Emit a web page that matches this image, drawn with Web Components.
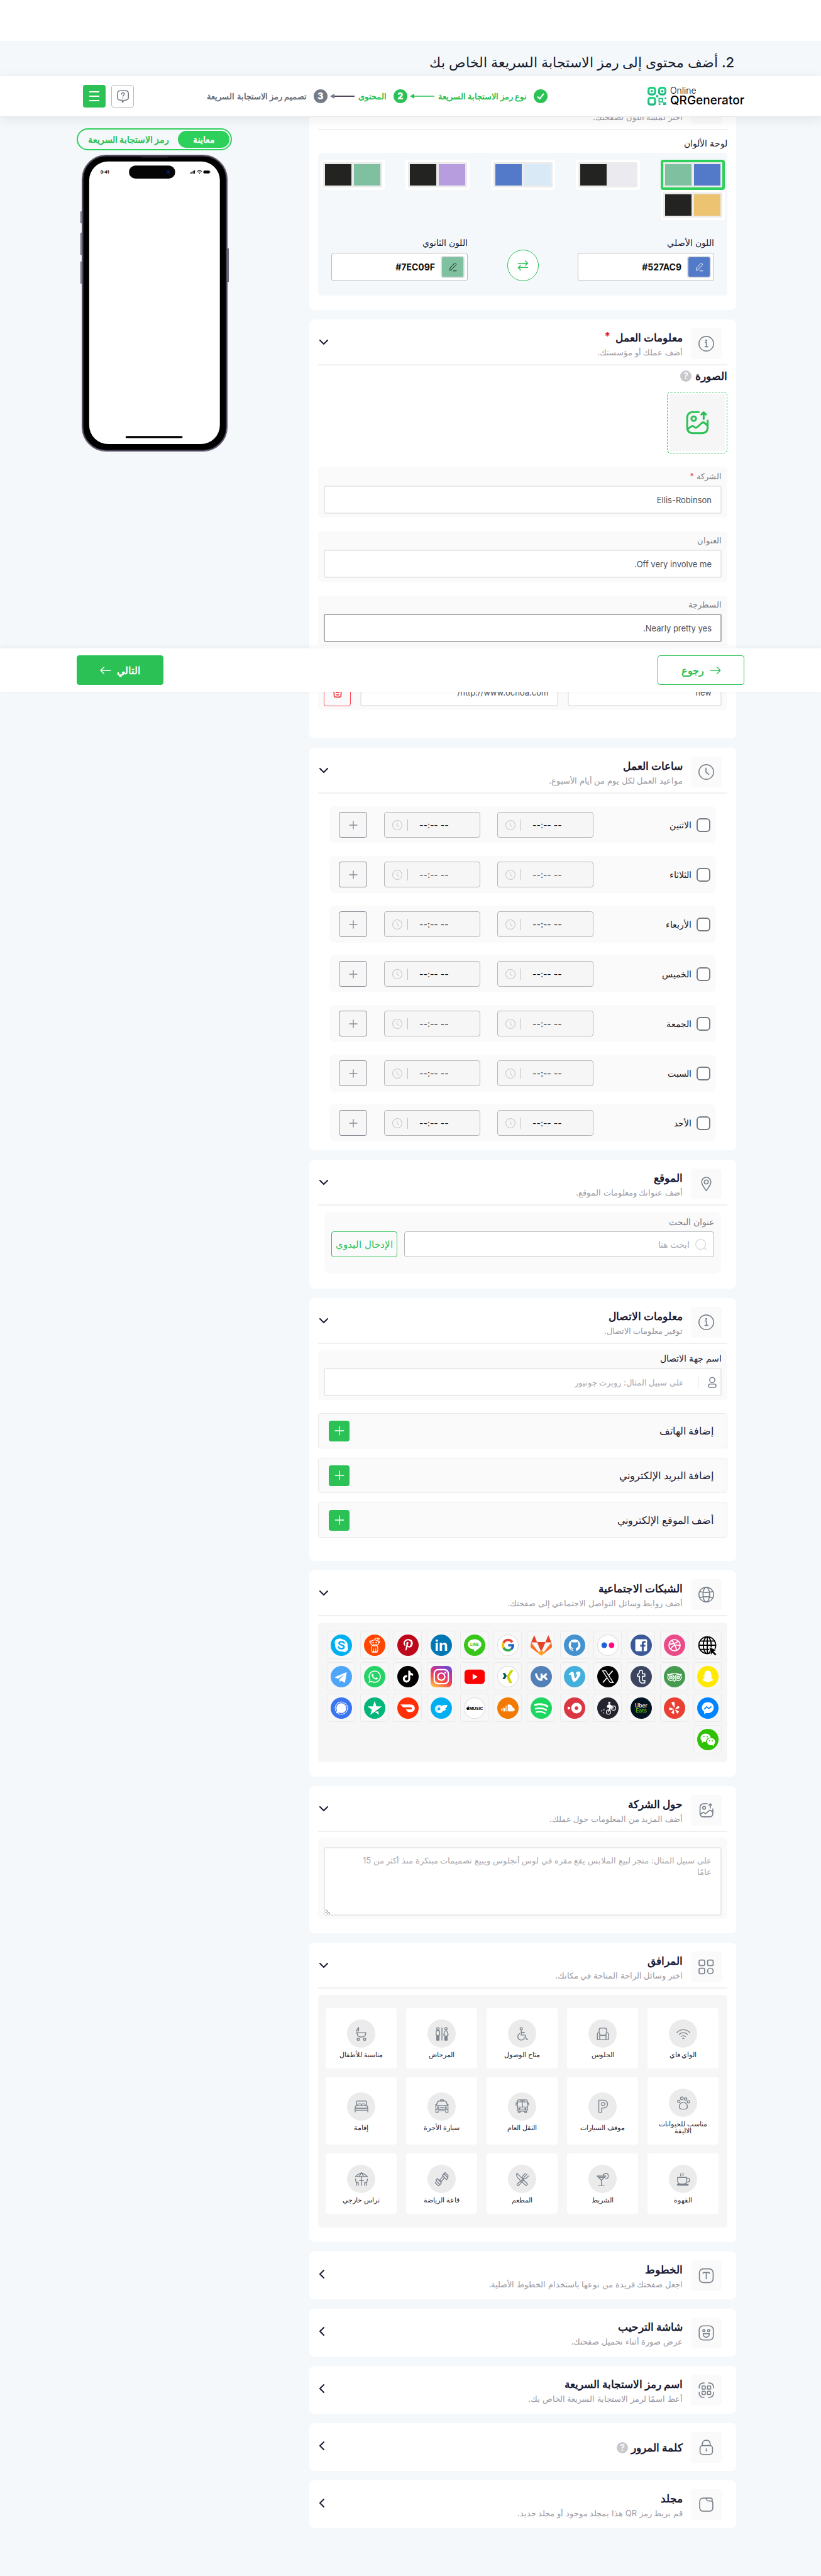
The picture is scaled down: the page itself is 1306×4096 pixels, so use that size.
<!DOCTYPE html>
<html lang="ar" dir="rtl">
<head>
<meta charset="utf-8">
<meta name="viewport" content="width=device-width, initial-scale=1">
<title>Online QR Generator</title>
<style>
  html { background: #f4f8fb; }
  body {
    margin: 0; font-family: Inter, "Liberation Sans", sans-serif; font-size: 13px; line-height: 20px; color: #1b1b33;
    --green: #2bc155; --lime: #2dd05b; --muted: #9a9aa3; --steel: #7a828c; --line: #ebebeb; --panel: #fafafa;
  }
</style>
</head>
<body>
<qr-page></qr-page>

<script>
/* ---------- shared base ---------- */
const RESET = `
  *, *::before, *::after { box-sizing: border-box; }
  :host { display: block; }
  :host([hidden]) { display: none; }
  button, input, textarea { font: inherit; color: inherit; margin: 0; }
  button { padding: 0; cursor: pointer; background: none; border: 0; }
  svg { display: block; flex: none; }
`;
class Base extends HTMLElement {
  constructor() { super(); this.attachShadow({ mode: 'open' }); }
  connectedCallback() { this.shadowRoot.innerHTML = `<style>${RESET}${this.css()}</style>${this.html()}`; }
  a(name, fallback = '') { return this.getAttribute(name) ?? fallback; }
  css() { return ''; }
  html() { return '<slot></slot>'; }
}
const define = (name, css, html) => customElements.define(name, class extends Base {
  css() { return css; }
  html() { return typeof html === 'function' ? html(this) : html; }
});

/* ---------- line icons, 24 unit grid ---------- */
const ICONS = {
  info: '<circle cx="12" cy="12" r="11.2"/><path d="M10.300 10h1.900v6.500M10 16.700h4.400"/><circle cx="12" cy="6.900" r=".7" fill="currentColor"/>',
  clock: '<circle cx="12" cy="12" r="11.200"/><path d="M11.500 6v6.300l4.200 3.300"/>',
  pin: '<path d="M12 22.500c-2.800-4.600-7-8.500-7-13.600a7 7 0 0 1 14 0c0 5.100-4.200 9-7 13.600z"/><circle cx="12" cy="9" r="3"/>',
  globe: '<circle cx="12" cy="12" r="11.200"/><ellipse cx="12" cy="12" rx="5" ry="11.200"/><path d="M2.500 7.500c6 1.600 13 1.600 19 0M2.500 16.500c6-1.600 13-1.600 19 0"/>',
  image: '<path d="M13.500 2H8C4.500 2 2.500 4 2.500 7.500v9C2.500 20 4.500 22 8 22h8.500c3.500 0 5.500-2 5.500-5.500V10"/><circle cx="8.700" cy="8.200" r="2.200"/><path d="M3 18l3.500-2.400c.8-.5 1.500-.4 2.200.1l.9.700c.8.600 1.800.5 2.500-.1l4.400-4c.7-.6 1.800-.6 2.500 0l2.500 2.200M18.200 8.500V2.300M16 4.300l2.200-2.200 2.200 2.200"/>',
  grid: '<rect x="1" y="1.500" width="8.500" height="8.500" rx="2"/><rect x="14" y="1.500" width="8.500" height="8.500" rx="2"/><rect x="1" y="14" width="8.500" height="8.500" rx="2"/><circle cx="18.250" cy="18.250" r="4.300"/>',
  type: '<rect x="1.500" y="1.500" width="21" height="21" rx="6"/><path d="M7 8.600c0-1 .6-1.600 1.600-1.600h6.800c1 0 1.600.6 1.600 1.600M12 7v9.800"/>',
  smile: '<rect x="1.200" y="1.200" width="21.600" height="21.600" rx="6"/><circle cx="8.300" cy="8.300" r="1.600"/><circle cx="15.700" cy="8.300" r="1.600"/><path d="M7.400 13h9.200v1a4.600 4.600 0 0 1-9.200 0z"/>',
  scan: '<path d="M1.200 8.500V7a6 6 0 0 1 6-6h1.500M15.500 1H17a6 6 0 0 1 6 6v1.500M23 15.500V17a6 6 0 0 1-6 6h-1.500M8.700 23H7.200a6 6 0 0 1-6-6v-1.500"/><rect x="5.500" y="5.500" width="5" height="5" rx="1"/><rect x="13.700" y="5.500" width="5" height="5" rx="1"/><rect x="5.500" y="13.700" width="5" height="5" rx="1"/><rect x="13.700" y="13.700" width="5" height="5" rx="1"/>',
  lock: '<rect x="2.500" y="9.300" width="19" height="13.500" rx="4"/><path d="M6 9.300V7c0-3.600 2.300-6 6-6s6 2.400 6 6v2.300M12 14.300v3.400"/>',
  folder: '<path d="M10.500 2H19a2 2 0 0 1 2 2v2.500M10.500 2H7.500C4 2 2 4 2 7.500v9C2 20 4 22 7.500 22h9c3.500 0 5.500-2 5.500-5.500V9.500c0-2-1-3-3-3h-3.500c-1.500 0-2.200-.5-2.800-1.700L12.500 3.500C12 2.400 11.500 2 10.500 2z"/>',
  down: '<path d="M3 7.500l9 9 9-9"/>',
  left: '<path d="M12 3l-9 9 9 9"/>',
  plus: '<path d="M12 3v18M3 12h18"/>',
  search: '<circle cx="11.500" cy="11.500" r="9.500"/><path d="M18.500 18.500l4 3.500"/>',
  user: '<circle cx="12" cy="7" r="5.500"/><rect x="4" y="15.500" width="16" height="7" rx="3.500"/>',
  trash: '<path d="M2 5.500h20M8 5.500V3.500C8 2.500 8.500 2 9.500 2h5c1 0 1.500.5 1.500 1.500v2M4 5.500l.8 13c.1 2.300 1.200 3.500 3.500 3.500h7.400c2.300 0 3.400-1.200 3.500-3.500l.8-13M9 12h6M10 17h4"/>',
  edit: '<path d="M4 20l1-5.500L15.500 3.200a2 2 0 0 1 3 0l.9.900a2 2 0 0 1 0 2.900L9 18.500zM13 22h8"/>',
  swap: '<path d="M3 8h18M16.500 3.500L21 8l-4.500 4M21 16H3M7.500 12L3 16.500 7.500 21"/>',
  right: '<path d="M1.500 12h21M15.500 5l7 7-7 7"/>',
  back: '<path d="M22.500 12h-21M8.500 5l-7 7 7 7"/>',
  help: '<path d="M7 1.500h10c3 0 5 2 5 5v7c0 3-2 5-5 5h-2.500L11 22.500v-4H7c-3 0-5-2-5-5v-7c0-3 2-5 5-5z"/><path d="M9.600 7.700c0-3.400 5-3.200 5-.2 0 1.900-2.500 2-2.500 4M12.100 14.300v.6"/>',
  wifi: '<path d="M1 9.500c6-6.300 16-6.300 22 0M4.700 13.200c4-4.300 10.600-4.300 14.600 0M8.300 16.800c2-2.200 5.400-2.200 7.400 0M11 20.300c.6-.6 1.400-.6 2 0"/>',
  chair: '<path d="M5.500 10V5c0-2 1-3 3-3h7c2 0 3 1 3 3v5M6.500 16V12c0-1.300-.9-2.100-2-2.100S2.500 10.700 2.500 12v10h19V12c0-1.300-.9-2.100-2-2.100s-2 .8-2 2.100v4M6.500 14.500h11M6.500 16v6M17.500 16v6"/>',
  access: '<circle cx="10" cy="3" r="2"/><path d="M10 5v9h6.500l2.500 7.500 2-.5M10 9.500h5.500M7 11.500a6 6 0 1 0 8.700 7"/>',
  wc: '<circle cx="5" cy="3" r="2.100"/><path d="M2 14V9c0-2 1-3 3-3s3 1 3 3v5M3 14v9h1.500v-8h1v8H7v-9M12 1.500v21.500"/><circle cx="19" cy="3" r="2.100"/><path d="M17 8l-2 6h2v9h1.500v-7h1v7H21v-9h2l-2-6c-.6-2.200-3.400-2.200-4 0z"/>',
  stroller: '<path d="M3 7L7 .8V7zM3 10h16.500c0 4.500-3 7.500-8 7.500S4.500 15 4.500 11z"/><circle cx="6.500" cy="21.300" r="2"/><circle cx="17.500" cy="21.300" r="2"/>',
  paw: '<path d="M12 10.500c-4 0-7 4-7 7.500 0 3 2 4.500 4.500 4.500h5c2.500 0 4.500-1.500 4.500-4.500 0-3.500-3-7.500-7-7.500z"/><circle cx="4" cy="9" r="2.100"/><circle cx="9.500" cy="3.800" r="2.400"/><circle cx="16" cy="4.800" r="2.100"/><circle cx="20.800" cy="9.800" r="2"/>',
  parking: '<path d="M5 1.500h8.500a6.800 6.800 0 0 1 0 13.600H10V22.500H5zM10 5.800v5h3.200a2.500 2.500 0 0 0 0-5z"/>',
  bus: '<rect x="3.500" y="1" width="17" height="19.500" rx="2"/><path d="M3.500 4.500h17M3.500 13.500h17M12 4.500v9M3.500 6.500H1v4M20.500 6.500H23v4M5 20.500V23h3v-2.500M16 20.500V23h3v-2.500M9.500 17h5M8.500 2.800h7"/><circle cx="6.700" cy="17" r="1.200"/><circle cx="17.300" cy="17" r="1.200"/>',
  taxi: '<path d="M1.500 22.500V12l3-7.500c.5-1 1.500-1.500 2.500-1.500h10c1 0 2 .5 2.500 1.500l3 7.500v10.500h-4V20h-13v2.500zM1 9.500h2M21 9.500h2M3 10.500h18M9.500 3V1h5v2M9.500 14.500h5M1.500 17.500h21"/><circle cx="5.500" cy="14.300" r="1.300"/><circle cx="18.500" cy="14.300" r="1.300"/>',
  bed: '<path d="M3.500 11V4.500c0-1 .5-1.500 1.500-1.500h14c1 0 1.500.5 1.500 1.500V11M2.500 11h19l1.500 3v5H1v-5zM1 19v3M23 19v3M5.500 10c0-3 6.500-3 6.500 0M12 10c0-3 6.500-3 6.500 0M1 15.500h22"/>',
  cup: '<path d="M2 9h16v5c0 4-2.500 6.500-6 6.500H8c-3.500 0-6-2.500-6-6.500zM18 10.500h2.500c3.300 0 3.300 6.500-1 6.500H17M1.500 21h19c-.3 1.300-1 2-2.500 2H4c-1.500 0-2.300-.7-2.500-2zM7.500 6.500c-1-1.500 1-2.500 0-4.500M11.500 6.500c-1-1.500 1-2.500 0-5"/>',
  cocktail: '<path d="M2 6.500h15L9.500 14zM9.500 14v8.500M5 22.500h9M4.500 9h10.500M12.500 6.500c0-6 9-5.500 9 0 0 3.200-2.300 4.800-5 4.500"/>',
  cutlery: '<path d="M2.500 1.500C1 5 3 9.500 8 13.500l9 8.500c1 1 2.200 1 3 .2.900-.9.800-2-.2-3zM17 2l-4 4c-1 1.300-1 2.500 0 4M22.500 6.500l-4 4c-1.500 1-2.700 1-4 0l-11 9.500c-1 1-1 2-.2 2.700.8.800 2 .7 2.800-.2l8-9.500M20 3.500l-5 5"/>',
  gym: '<path d="M8 13.500l6-6.500 2.500 2.800-6 6.500zM13 5.500l2.500-3 7 7.500-2.500 3zM16 2l1.500-1.500 5.500 6L21.500 8M1.500 14l2.500-3 7 7.500-2.500 3zM1 17l-.500 1.500 5.500 5 1.500-1"/>',
  terrace: '<path d="M1.500 7.500C4 5 8 2.500 12 1c4 1.500 8 4 10.500 6.500zM8 7.500L12 1l4 6.500M12 7.500V23M8.500 14.500h7M1.500 12l1.500 6h3.500V23M3 18v5M22.500 12L21 18h-3.500V23M21 18v5"/>'
};
customElements.define('qr-icon', class extends Base {
  css() { return ':host{display:inline-flex;flex:none;width:24px;height:24px} svg{width:100%;height:100%;overflow:visible}'; }
  html() {
    return `<svg viewBox="0 0 24 24" fill="none" stroke="currentColor" stroke-width="${this.a('stroke', '1.6')}" stroke-linecap="round" stroke-linejoin="round" aria-hidden="true">${ICONS[this.a('name')]}</svg>`;
  }
});

/* ---------- brand marks, 38 unit grid ---------- */
const disc = c => `<circle cx="19" cy="19" r="19" fill="${c}"/>`;
const ring = '<circle cx="19" cy="19" r="18.400" fill="#fff" stroke="#dedede" stroke-width="1.200"/>';
const mark = (d, s, fill = '#fff') => `<g transform="translate(${(38 - s) / 2} ${(38 - s) / 2}) scale(${s / 24})"><path fill="${fill}" d="${d}"/></g>`;
const BRANDS = {
  Website: '<g fill="none" stroke="#000" stroke-width="2"><circle cx="18" cy="19" r="15"/><ellipse cx="18" cy="19" rx="7" ry="15"/><path d="M18 4v30M3 19h30M5.500 11.500h25M5.500 26.500h25"/></g><path d="M21 22l14 5.500-5 2.500 5 5-3 3-5-5-2.500 4.500z" stroke="#f6f6f6" stroke-width="1.200"/>',
  Dribbble: disc('#ea4c89') + '<g fill="none" stroke="#fff" stroke-width="2"><circle cx="19" cy="19" r="10"/><path d="M14.500 10.500c4 5 6.500 10 8 17M9.500 17c6 .2 12-.8 16-5M12 26c3-6 9-9 17-6.500"/></g>',
  Facebook: disc('#3b5998') + '<rect x="8.500" y="8.500" width="21" height="21" rx="2" fill="#fff"/><path d="M20 29.500V21.500h-2.700v-3.200H20v-2.600c0-2.800 1.700-4.200 4.200-4.200h2.400v3h-1.500c-1.300 0-1.700.7-1.700 1.700v2.100h3.200l-.5 3.200h-2.700v8z" fill="#3b5998"/>',
  Flickr: ring + '<circle cx="12.500" cy="19" r="5" fill="#1d63d8"/><circle cx="25.500" cy="19" r="5" fill="#ff0a84"/>',
  GitHub: disc('#4493d0') + mark('M12 .297c-6.630 0-12 5.373-12 12 0 5.303 3.438 9.800 8.205 11.385.6.113.82-.258.82-.577 0-.285-.01-1.040-.015-2.040-3.338.724-4.042-1.610-4.042-1.610C4.422 18.070 3.633 17.700 3.633 17.700c-1.087-.744.084-.729.084-.729 1.205.084 1.838 1.236 1.838 1.236 1.070 1.835 2.809 1.305 3.495.998.108-.776.417-1.305.76-1.605-2.665-.3-5.466-1.332-5.466-5.930 0-1.310.465-2.380 1.235-3.220-.135-.303-.54-1.523.105-3.176 0 0 1.005-.322 3.300 1.230.96-.267 1.980-.399 3-.405 1.020.006 2.040.138 3 .405 2.280-1.552 3.285-1.230 3.285-1.230.645 1.653.24 2.873.12 3.176.765.84 1.230 1.910 1.230 3.220 0 4.610-2.805 5.625-5.475 5.920.42.36.81 1.096.81 2.220 0 1.606-.015 2.896-.015 3.286 0 .315.21.69.825.57C20.565 22.092 24 17.592 24 12.297c0-6.627-5.373-12-12-12', 21),
  GitLab: '<path d="M1 14L6.500 1l5 12.500h15L31.500 1 37 14z" fill="#e24329"/><path d="M1 14l18 23.500L37 14l1 6.500c.2 1.500-.3 2.500-1.500 3.500L19 37.500 1.500 24C.3 23 -.2 22 0 20.500z" fill="#fc6d26"/><path d="M11.500 13.500h15L19 31z" fill="#e24329"/><path d="M12.500 32.500L19 27.500l6.500 5L19 37.500z" fill="#fca326"/>',
  Google: ring + '<g fill="none" stroke-width="4.200"><path d="M26.800 13.600A9 9 0 0 0 11.200 14.500" stroke="#ea4335"/><path d="M11.200 14.500a9 9 0 0 0 0 9" stroke="#fbbc05"/><path d="M11.200 23.500a9 9 0 0 0 13.500 2.600" stroke="#34a853"/><path d="M24.700 26.100A9 9 0 0 0 28 19.200H19.500" stroke="#1967d2"/></g>',
  Line: '<circle cx="19" cy="19" r="19" fill="#39c61a"/><path d="M19 8.500c6.600 0 12 4 12 9 0 5.500-7.500 9.500-12 12.500-.8.500-1-.2-.8-3.600C12 26 7 22.500 7 17.500c0-5 5.400-9 12-9z" fill="#fff"/><text x="19" y="20.500" font-size="7" font-weight="700" text-anchor="middle" fill="#39c61a">LINE</text>',
  LinkedIn: disc('#0077b5') + '<text x="19" y="29" font-size="26" font-weight="700" text-anchor="middle" fill="#fff">in</text>',
  Pinterest: disc('#bd081c') + mark('M12.500 2C7.500 2 4.800 5.400 4.800 8.900c0 1.800.9 3.600 2.300 4.200.2.100.5 0 .5-.3l.2-.8c.1-.3 0-.4-.2-.6-.4-.5-.7-1.200-.7-2.200 0-2.800 2.100-5.100 5.400-5.100 2.800 0 4.400 1.800 4.400 4.100 0 3-1.300 5.600-3.300 5.600-1.100 0-1.900-.9-1.600-2 .3-1.300.9-2.700.9-3.700 0-.9-.5-1.600-1.400-1.600-1.100 0-2 1.200-2 2.700 0 1 .3 1.700.3 1.700l-1.400 5.900c-.4 1.700-.1 4 0 4.200 0 .1.200.2.3.1.1-.2 1.500-1.900 2-3.700l.8-3c.4.700 1.500 1.400 2.700 1.400 3.500 0 5.900-3.300 5.900-7.500C19.900 4.900 17.200 2 12.500 2z', 26),
  Reddit: disc('#ff4500') + '<g fill="none" stroke="#fff" stroke-width="1.300"><ellipse cx="19" cy="15" rx="7" ry="5.300"/><path d="M13 12c-2-2-4.500.8-1.800 3M25 12c2-2 4.500.8 1.800 3M19 9.700l1.500-3h3.500M15.500 17.300c2 1.500 5 1.500 7 0M14.500 20c-1.500 3-1.500 7 0 10.500h9c1.500-3.500 1.500-7.500 0-10.500M17 31v-6M21 31v-6M14 31.500h10"/><circle cx="25.600" cy="7.500" r="1.500"/></g><circle cx="16.300" cy="14.300" r="1.300" fill="#fff"/><circle cx="21.700" cy="14.300" r="1.300" fill="#fff"/>',
  Skype: disc('#00aff0') + '<path d="M14 7.500a7 7 0 0 1 6.500.8A11 11 0 0 1 30 21.500 6.600 6.600 0 0 1 20.500 30 11 11 0 0 1 8 17.500 6.700 6.700 0 0 1 14 7.500z" fill="#fff"/><path d="M24 15.200c-1-3-9-3.300-9 .4 0 3.700 8.800 2.200 8.800 6.400 0 4-9 4-10 .2" fill="none" stroke="#00aff0" stroke-width="2.800" stroke-linecap="round"/>',
  Snapchat: disc('#ffe900') + '<path d="M19 8.500c4 0 6 2.700 6 6v2.700c1-.4 2 .1 2 .8 0 .8-1.500 1.200-2.300 1.700.8 2.300 2.300 3.900 4.300 4.600.4.900-1.300 1.400-2.700 1.700l-.5 1.300c-2.500-.4-3.300.1-4.300 1-1.500 1.100-3.500 1.100-5 0-1-.9-1.800-1.400-4.300-1l-.5-1.300c-1.400-.3-3.100-.8-2.700-1.700 2-.7 3.500-2.300 4.300-4.600-.8-.5-2.300-.9-2.300-1.700 0-.7 1-1.200 2-.8v-2.700c0-3.300 2-6 6-6z" fill="#fff"/>',
  Tripadvisor: disc('#469b51') + '<g fill="none" stroke="#fff" stroke-width="1.600"><circle cx="12.500" cy="20.500" r="5.500"/><circle cx="25.500" cy="20.500" r="5.500"/><circle cx="12.500" cy="20.500" r="2.400"/><circle cx="25.500" cy="20.500" r="2.400"/><path d="M6 15h5c5-2.500 11-2.500 16 0h5M17 25l2 2.500 2-2.500"/></g><circle cx="12.500" cy="20.500" r="1" fill="#fff"/><circle cx="25.500" cy="20.500" r="1" fill="#fff"/>',
  Tumblr: disc('#3b4560') + '<path d="M16.500 8h4.500v6h4.500v4.500H21V24c0 2 1.500 2.300 4.500 1.500V30c-5 1.500-9.500 0-9.500-5v-6.500h-3.500V15c2.500-.8 3.700-3 4-7z" fill="#3b4560" stroke="#fff" stroke-width="1.700"/>',
  X: disc('#000') + '<path d="M9.500 8.500h5.500l13.500 21H23z" fill="none" stroke="#fff" stroke-width="1.500"/><path d="M27.500 8.500L20.300 17M17.500 21l-7.500 8.500" stroke="#fff" stroke-width="1.800"/>',
  Vimeo: disc('#43afdb') + mark('M23.977 6.416c-.105 2.338-1.739 5.543-4.894 9.609-3.268 4.247-6.026 6.370-8.290 6.370-1.409 0-2.578-1.294-3.553-3.881L5.322 11.400C4.603 8.816 3.834 7.522 3.010 7.522c-.179 0-.806.378-1.881 1.132L0 7.197c1.185-1.044 2.351-2.084 3.501-3.128C5.080 2.701 6.266 1.984 7.055 1.910c1.867-.18 3.016 1.100 3.447 3.838.465 2.953.789 4.789.971 5.507.539 2.450 1.131 3.674 1.776 3.674.502 0 1.256-.796 2.265-2.385 1.004-1.589 1.540-2.797 1.612-3.628.144-1.371-.395-2.061-1.614-2.061-.574 0-1.167.121-1.777.391 1.186-3.868 3.434-5.757 6.762-5.637 2.473.06 3.628 1.664 3.493 4.797z', 21),
  VK: disc('#5181b8') + '<path d="M9.500 13.500c.8 6 4.500 11.500 10 11v-11M28 13.500c-1 3-4 5.300-8 5.500 4.500 0 7.500 2.500 8.800 5.500" fill="none" stroke="#fff" stroke-width="3.600"/>',
  Xing: ring + '<path d="M9.500 12.500h4.500l3 5-3.500 6H9l3.500-6z" fill="#0b5c5e"/><path d="M24 7h5L21.500 19l5 11.500h-5L16.500 19z" fill="#cfd600"/>',
  YouTube: '<rect x="1" y="6.500" width="36" height="25.500" rx="6" fill="#f00"/><path d="M15.500 14v10.500l9-5.200z" fill="#fff"/>',
  Instagram: '<defs><linearGradient id="ig" x1=".2" y1="1" x2=".7" y2="0"><stop offset="0" stop-color="#fdc04c"/><stop offset=".35" stop-color="#f5503f"/><stop offset=".65" stop-color="#d62f89"/><stop offset="1" stop-color="#6d4bd0"/></linearGradient></defs><rect width="38" height="38" rx="8" fill="url(#ig)"/><g fill="none" stroke="#fff" stroke-width="2.600"><rect x="6.500" y="6.500" width="25" height="25" rx="7"/><circle cx="19" cy="19" r="6.300"/></g><circle cx="26.200" cy="11.800" r="1.700" fill="#fff"/>',
  TikTok: disc('#000') + mark('M12.525.02c1.310-.02 2.610-.01 3.910-.02.08 1.530.63 3.090 1.750 4.170 1.120 1.110 2.700 1.620 4.240 1.790v4.030c-1.440-.05-2.890-.35-4.200-.97-.57-.26-1.100-.59-1.620-.93-.01 2.920.01 5.840-.02 8.750-.08 1.400-.54 2.790-1.350 3.940-1.310 1.920-3.580 3.170-5.910 3.210-1.430.08-2.860-.31-4.080-1.030-2.020-1.190-3.440-3.370-3.650-5.710-.02-.5-.03-1-.01-1.490.18-1.900 1.120-3.720 2.580-4.960 1.660-1.440 3.980-2.130 6.150-1.720.02 1.480-.04 2.960-.04 4.440-.99-.32-2.150-.23-3.020.37-.63.41-1.110 1.040-1.360 1.750-.21.51-.15 1.070-.14 1.610.24 1.640 1.820 3.020 3.500 2.870 1.120-.01 2.190-.66 2.770-1.610.19-.33.4-.67.41-1.060.1-1.790.06-3.570.07-5.360.01-4.030-.01-8.050.02-12.070z', 21),
  WhatsApp: disc('#25d366') + mark('M17.472 14.382c-.297-.149-1.758-.867-2.030-.967-.273-.099-.471-.148-.67.15-.197.297-.767.966-.94 1.164-.173.199-.347.223-.644.075-.297-.15-1.255-.463-2.390-1.475-.883-.788-1.480-1.761-1.653-2.059-.173-.297-.018-.458.13-.606.134-.133.298-.347.446-.52.149-.174.198-.298.298-.497.099-.198.05-.371-.025-.52-.075-.149-.669-1.612-.916-2.207-.242-.579-.487-.5-.669-.51-.173-.008-.371-.01-.57-.01-.198 0-.52.074-.792.372-.272.297-1.040 1.016-1.040 2.479 0 1.462 1.065 2.875 1.213 3.074.149.198 2.096 3.200 5.077 4.487.709.306 1.262.489 1.694.625.712.227 1.360.195 1.871.118.571-.085 1.758-.719 2.006-1.413.248-.694.248-1.289.173-1.413-.074-.124-.272-.198-.57-.347m-5.421 7.403h-.004a9.870 9.870 0 01-5.031-1.378l-.361-.214-3.741.982.998-3.648-.235-.374a9.860 9.860 0 01-1.510-5.260c.001-5.450 4.436-9.884 9.888-9.884 2.640 0 5.122 1.030 6.988 2.898a9.825 9.825 0 012.893 6.994c-.003 5.450-4.437 9.884-9.885 9.884m8.413-18.297A11.815 11.815 0 0012.050 0C5.495 0 .16 5.335.157 11.892c0 2.096.547 4.142 1.588 5.945L.057 24l6.305-1.654a11.882 11.882 0 005.683 1.448h.005c6.554 0 11.890-5.335 11.893-11.893a11.821 11.821 0 00-3.480-8.413Z', 22),
  Telegram: disc('#4fa6f9') + '<path d="M28.500 11L8 19.500c-.8.400-.8 1 0 1.300l5.300 1.700L25 14.300l-9.300 9.500v5l3-2.900 5.300 3.500c.8.400 1.300.2 1.600-.7z" fill="#fff"/>',
  Messenger: disc('#0084ff') + '<path d="M19 8.500c6 0 10.500 4.300 10.500 9.800S25 28 19 28c-1 0-2-.1-3-.4L12.500 29.500v-4C10 23.800 8.500 21.300 8.500 18.300c0-5.500 4.500-9.800 10.500-9.800z" fill="#fff"/><path d="M12.500 21l4.300-4.300 4 3 4.500-3.500" fill="none" stroke="#0084ff" stroke-width="2"/>',
  Yelp: disc('#ea3f33') + '<g fill="#fff"><path d="M13.500 9.500c0-1 4.500-2.500 5.200-1.700.5.800.8 9.800.3 10.200-.6.500-5.500-7.500-5.500-8.500zM10.300 17.500l6.500 2.700c.6.400.5 1-.1 1.200l-6.300 1.500c-1-.4-1-5-.1-5.400zM18 22.300l.3 6.300c-.4 1-4.800-.5-5.200-1.500l4-5c.4-.4.9-.2.9.200zM21 21.800l5.500 2.700c.8.800-1.800 4.500-2.900 4.300l-3.300-5.900c-.2-.8.200-1.200.7-1.100zM20.800 19.500l4.200-4.700c1-.5 3.200 3.200 2.800 4.200l-6.300 1.600c-.7 0-1.100-.6-.7-1.100z"/></g>',
  'Uber Eats': disc('#021321') + '<text x="19" y="17.500" font-size="9.500" font-weight="500" text-anchor="middle" fill="#fff">Uber</text><text x="19" y="27" font-size="9.500" font-weight="600" text-anchor="middle" fill="#5fb709">Eats</text>',
  Postmates: disc('#23242e') + '<g fill="none" stroke="#fff" stroke-width="1.300"><circle cx="20" cy="26" r="3.800"/><circle cx="29" cy="19" r="3.800"/><path d="M20 26l2-7 7 0M25 14l4 5"/></g><path d="M17 18c0-4 2-6 6-6l3 4-2 3-1 6-2-1 .500-5z" fill="#fff"/><circle cx="21.500" cy="9.500" r="2" fill="#fff"/><g fill="#fff"><circle cx="7.500" cy="24" r="1"/><circle cx="12" cy="22" r="1"/><circle cx="11.500" cy="27.500" r="1"/></g>',
  OpenTable: disc('#da3743') + '<circle cx="22.500" cy="19" r="9.500" fill="#fff"/><circle cx="22.500" cy="19" r="3.200" fill="#da3743"/><circle cx="8.800" cy="19" r="2.400" fill="#fff"/>',
  Spotify: disc('#1ed760') + '<g fill="none" stroke="#fff" stroke-linecap="round"><path d="M8 13.500c7.500-2.300 15.500-1.500 22 2.300" stroke-width="3.400"/><path d="M9 20c6.500-1.800 13.500-1 19 2.300" stroke-width="2.900"/><path d="M10 26c5.500-1.500 11-.8 16 2" stroke-width="2.400"/></g>',
  SoundCloud: disc('#f27a00') + '<path d="M18.500 13c5-1.500 8.500 1.500 9 5.300 2 0 3.500 1.500 3.500 3.300S29.500 25 27.500 25h-9z" fill="#fff"/><path d="M8 19.500v4.500M10.500 18v7M13 19v6M15.700 15v10" stroke="#fff" stroke-width="1.500"/>',
  'Apple Music': ring + '<path d="M6.500 17.500c1-.7 2.500-.6 3 .2-1 .8-.9 2.200.2 2.800-.5 1.500-1.500 2-2.700 1.700-1.400.3-2.500-1-2.500-2.700 0-1.200.8-2 2-2zM7 17c-.1-1 .5-1.800 1.500-2 .1 1-.5 1.900-1.500 2z"/><text x="21.700" y="22" font-size="7.400" font-weight="700" text-anchor="middle">MUSIC</text>',
  OnlyFans: disc('#00aff0') + '<circle cx="15" cy="20.500" r="7.500" fill="#ccecfa"/><path d="M30 13.500c-6 0-10 .5-12.500 4L13 26.500l3 1.500c3 0 5-1.500 6-4.500 3.500 0 5-1.200 5.500-3.200l-3.500-.3c3 0 5-2 6-6.500z" fill="#fff"/><circle cx="15" cy="20.500" r="2.300" fill="#00aff0"/>',
  DoorDash: disc('#ff3008') + '<path d="M5.500 12.500h18c10 0 10.500 13.500 0 13.500h-4.500l-4-4.700h9c2.500 0 2.500-3.700 0-3.700H10.500z" fill="#fff"/>',
  Trustpilot: disc('#00b67a') + '<path d="M19 6.500l3.200 9.500h9.500l-7.700 5.800 3 9.200-8-5.700-8 5.700 3-9.200L6.300 16h9.500z" fill="#fff"/><path d="M24 22l.8 2.500L19 25.500z" fill="#005128"/>',
  Signal: disc('#3a76f0') + '<circle cx="19" cy="19" r="11" fill="none" stroke="#fff" stroke-width="1.300" stroke-dasharray="4 .8"/><path d="M19 10.300c5 0 8.700 3.800 8.700 8.700s-3.700 8.700-8.700 8.700c-1.500 0-2.900-.4-4.100-1l-4.900 1.600 1.500-4.600a8.500 8.500 0 0 1-1.200-4.700c0-4.900 3.700-8.700 8.700-8.700z" fill="#fff"/>',
  WeChat: disc('#2dc100') + '<path d="M15 8.500c5 0 9 3.300 9 7.500h-1c-4.500 0-7.500 3.200-7.300 7.300-1.500.1-2.700-.1-4-.5L8.500 25v-3.500C6.700 20 6 18 6 16c0-4.200 4-7.500 9-7.500z" fill="#fff"/><path d="M24.500 16.500c4.200 0 7.500 2.800 7.500 6.300 0 1.900-1 3.700-2.500 4.800l.5 3-3-1.800c-5.500 1-9.500-2-9.500-6 0-3.500 2.800-6.300 7-6.300z" fill="#fff"/><g fill="#2dc100"><circle cx="12" cy="14" r="1.200"/><circle cx="18" cy="14" r="1.200"/><circle cx="22" cy="21" r="1"/><circle cx="27" cy="21" r="1"/></g>'
};
define('social-tile', `
  :host { width: 45px; height: 45px; }
  button { display: flex; align-items: center; justify-content: center; width: 100%; height: 100%; border: 1px solid var(--line); border-radius: 4px; background: #f7f7f7; }
  svg { width: 34px; height: 34px; overflow: visible; direction: ltr; }
`, e => `<button type="button" aria-label="${e.a('brand')}"><svg viewBox="0 0 38 38">${BRANDS[e.a('brand')]}</svg></button>`);

/* ---------- page furniture ---------- */
define('brand-logo', `
  a { display: flex; align-items: center; direction: ltr; gap: 6px; color: #000; text-decoration: none; }
  .txt { display: grid; }
  .one { font-size: 14px; line-height: 14px; font-weight: 300; }
  .two { font-size: 19px; line-height: 18px; font-weight: 500; }
`, `<a href="#">
  <svg width="30" height="30" viewBox="0 0 33 33"><defs><linearGradient id="g" x2="0" y2="1"><stop stop-color="#1dd17c"/><stop offset="1" stop-color="#1fb584"/></linearGradient></defs>
  <g fill="none" stroke="url(#g)" stroke-width="3.500"><rect x="1.800" y="1.800" width="11.500" height="11.500" rx="3.500"/><rect x="20.300" y="1.800" width="11" height="11.500" rx="3.500"/><rect x="1.800" y="19.500" width="11.500" height="11.500" rx="3"/></g>
  <g fill="#1fbd80"><rect x="5.700" y="5.700" width="3.600" height="3.600"/><rect x="24" y="5.700" width="3.600" height="3.600"/><rect x="15" y="14.500" width="4" height="4"/><rect x="30" y="18.500" width="3" height="3"/><rect x="27.500" y="27" width="5" height="5"/><rect x="19.500" y="29" width="3" height="3"/></g><rect x="20.200" y="20.500" width="6" height="6" fill="none" stroke="#1fbd80" stroke-width="2"/></svg>
  <span class="txt"><span class="one">Online</span><span class="two">QRGenerator</span></span></a>`);

define('wizard-steps', `
  ol { display: flex; align-items: center; gap: 6px; margin: 0; padding: 0; list-style: none; font-size: 13px; font-weight: 700; white-space: nowrap; }
  li { display: flex; align-items: center; color: var(--green); }
  li.next { color: #6b6f76; }
  b { display: grid; place-items: center; width: 22px; height: 22px; margin-left: 11px; border-radius: 50%; background: var(--green); color: #fff; font-size: 14px; }
  .next b { background: #747b85; }
  .arrow { width: 39px; height: 8px; margin-left: 4px; }
`, `<ol>
  <li><b><svg width="14" height="14" viewBox="0 0 14 14" fill="none" stroke="#fff" stroke-width="2"><path d="M2 7.500l3.500 3.500L12 3"/></svg></b>نوع رمز الاستجابة السريعة</li>
  <li><svg class="arrow" viewBox="0 0 39 8"><path d="M6 4h33" stroke="#2bc155" stroke-width="1.400"/><path d="M0 4l7-4v8z" fill="#2bc155"/></svg><b>2</b>المحتوى</li>
  <li class="next"><svg class="arrow" viewBox="0 0 39 8"><path d="M6 4h33" stroke="#1b0b26" stroke-width="1.400"/><path d="M0 4l7-4v8z" fill="#747b85"/></svg><b>3</b>تصميم رمز الاستجابة السريعة</li>
</ol>`);

define('top-header', `
  :host { position: relative; z-index: 3; background: #fff; border-bottom: 1px solid #e3e6e8; box-shadow: 0 4px 18px rgba(20,30,40,.08); }
  .in { display: flex; align-items: center; max-width: 1062px; height: 64px; margin: 0 auto; padding-left: 10px; }
  wizard-steps { margin-right: 159px; }
  .tools { display: flex; gap: 9px; margin-right: auto; }
  button { display: grid; place-items: center; width: 36px; height: 36px; border: 1px solid #b8bbbf; border-radius: 4px; color: #747b85; }
  .menu { border: 0; background: var(--green); color: #fff; }
`, `<header class="in"><brand-logo></brand-logo><wizard-steps></wizard-steps>
  <div class="tools"><button type="button" aria-label="مساعدة"><qr-icon name="help" stroke="1.800" style="width:21px;height:21px"></qr-icon></button>
  <button class="menu" type="button" aria-label="القائمة"><svg width="16" height="16" viewBox="0 0 16 16" stroke="#fff" stroke-width="2"><path d="M0 1h16M0 8h16M0 15h16"/></svg></button></div></header>`);

define('phone-preview', `
  :host { width: 247px; }
  .tabs { display: flex; height: 35px; padding: 2px; border: 2px solid var(--lime); border-radius: 18px; }
  .tabs button { flex: 1; font-size: 14px; font-weight: 700; color: var(--green); }
  .tabs .on { flex: 0 0 82px; border-radius: 14px; background: var(--lime); color: #fff; }
  svg { width: 236px; height: 472px; margin: 7px auto 0; direction: ltr; }
`, `<div class="tabs"><button class="on" type="button">معاينة</button><button type="button">رمز الاستجابة السريعة</button></div>
<svg viewBox="0 0 260 520" role="img" aria-label="phone">
  <g fill="#8d8096" stroke="#4d4458" stroke-width=".8"><rect x=".4" y="100" width="3" height="19.500"/><rect x=".4" y="137.500" width="3" height="37.500"/><rect x=".4" y="187.500" width="3" height="37.500"/><rect x="256.500" y="164.500" width="3" height="58"/></g>
  <rect x="2.700" y=".5" width="254.600" height="519" rx="42" fill="#c9c4ce" stroke="#575060"/>
  <rect x="4.200" y="2" width="251.600" height="516" rx="40.500" fill="#000" stroke="#4c4459" stroke-width="1.800"/>
  <path d="M106 4.500h48" stroke="#1c1c1f" stroke-width="1.600"/>
  <rect x="15.300" y="11.800" width="229" height="495" rx="33" fill="#fff"/>
  <rect x="85" y="19" width="81" height="23" rx="11.500" fill="#050505"/><circle cx="154" cy="30.500" r="3.800" fill="#0a0f35"/><circle cx="154" cy="30.500" r="1.600" fill="#15206a"/>
  <text x="35" y="33" font-size="7.500" font-weight="700" fill="#000">9:41</text>
  <path d="M192 33v-2h1.500v2zM194.300 33v-3h1.500v3zM196.700 33v-4.500h1.500v4.500zM199.100 33v-5.800h1.500v5.800z"/>
  <path d="M204.500 29.300c2.400-2 5.600-2 8 0M206 31c1.500-1.200 3.500-1.200 5 0" fill="none" stroke="#000" stroke-width="1.200"/><circle cx="208.500" cy="32.500" r=".8"/>
  <rect x="215.500" y="27.700" width="11" height="5.200" rx="1.600"/><rect x="227" y="29.300" width=".8" height="2" rx=".4"/>
  <rect x="79" y="492.700" width="100" height="4" rx="2"/>
</svg>`);

/* ---------- cards ---------- */
define('help-dot', ':host{display:inline-grid;place-items:center;width:18px;height:18px;border-radius:50%;background:#c9c9cd;color:#fff;font-size:14px;line-height:18px;font-weight:600}', '<span>?</span>');
define('form-card', `
  :host { border-radius: 8px; background: #fff; }
  header { display: flex; align-items: center; margin: 0 14px; padding: 14px 9px 8px 1px; border-bottom: 2px solid #f0f0f0; }
  :host([collapsed]) header { padding-bottom: 13px; border-bottom: 0; }
  .box { display: grid; place-items: center; width: 49px; height: 49px; border-radius: 5px; background: var(--panel); color: var(--steel); }
  .txt { flex: 1; margin-right: 13px; }
  h2 { display: flex; align-items: center; gap: 5px; min-height: 26px; margin: 0; font-size: 17px; line-height: 26px; font-weight: 700; }
  h2 em { align-self: flex-start; margin-right: 3px; color: #f0142f; font-style: normal; line-height: 22px; }
  p { margin: 0; color: var(--muted); font-size: 13px; line-height: 20px; }
  .chev { color: #1b1b33; }
  .chev qr-icon { width: 16px; height: 16px; }
  .body { padding: 0 14px; }
  :host([collapsed]) .body { display: none; }
`, e => `<section><header><span class="box"><qr-icon name="${e.a('icon')}" style="width:25px;height:25px"></qr-icon></span>
  <div class="txt"><h2>${e.a('heading')}${e.hasAttribute('required') ? '<em>*</em>' : ''}${e.hasAttribute('help') ? '<help-dot></help-dot>' : ''}</h2>${e.a('sub') ? `<p>${e.a('sub')}</p>` : ''}</div>
  <button class="chev" type="button" aria-label="توسيع"><qr-icon name="${e.hasAttribute('collapsed') ? 'left' : 'down'}" stroke="3"></qr-icon></button></header>
  <div class="body"><slot></slot></div></section>`);

define('color-swatch', `
  button { display: flex; align-items: center; justify-content: center; width: 102px; height: 48px; border-radius: 4px; background: #fff; }
  :host([selected]) button { background: var(--lime); }
  span { display: flex; gap: 4px; width: 94px; height: 40px; padding: 3px; background: #ebebeb; }
  i { flex: 1; background: var(--c); }
`, e => `<button type="button" aria-label="${e.a('a')} ${e.a('b')}"><span><i style="--c:${e.a('a')}"></i><i style="--c:${e.a('b')}"></i></span></button>`);

define('color-field', `
  :host { width: 217px; }
  label { display: block; margin-bottom: 6px; font-size: 14px; }
  .in { display: flex; align-items: center; height: 45px; padding: 4px; border: 1px solid #b9bbbe; border-radius: 4px; background: #fff; }
  button { display: grid; place-items: center; width: 38px; height: 35px; border: 2px solid #dcdfe2; border-radius: 4px; background: var(--c); color: var(--i); }
  input { flex: 1; min-width: 0; padding: 0 9px; border: 0; outline: 0; background: none; color: #111; font-size: 14px; font-weight: 700; direction: ltr; text-align: right; }
`, e => `<label for="i">${e.a('label')}</label><div class="in" style="--c:${e.a('value')};--i:${e.a('ink')}"><button type="button" aria-label="${e.a('label')}"><qr-icon name="edit" style="width:15px;height:15px"></qr-icon></button><input id="i" value="${e.a('value')}"></div>`);

define('text-field', `
  :host { padding: 4px 9px 6px; border-radius: 5px; background: var(--panel); }
  label { display: block; margin-bottom: 5px; color: #7a7d84; }
  :host([dark]) label { color: #1b1b33; font-size: 14px; }
  label em { color: #e6384b; font-style: normal; margin-right: 4px; }
  .in { display: flex; align-items: center; height: 45px; border: 2px solid #e9e9e9; border-radius: 3px; background: #fff; }
  :host([active]) .in { border-color: #aeaeb3; }
  qr-icon { width: 18px; height: 18px; margin: 0 4px 0 13px; color: var(--steel); }
  i { width: 1px; height: 20px; background: #dedede; margin-left: 8px; }
  input { flex: 1; min-width: 0; height: 100%; padding: 0 14px; border: 0; outline: 0; background: none; color: #4b4f58; }
  input::placeholder { color: #a9a9ae; opacity: 1; }
`, e => `<label for="i">${e.a('label')}${e.hasAttribute('required') ? '<em>*</em>' : ''}</label><div class="in">${e.a('icon') ? `<qr-icon name="${e.a('icon')}" stroke="2"></qr-icon><i></i>` : ''}<input id="i" value="${e.a('value')}" placeholder="${e.a('placeholder')}"></div>`);

define('link-row', `
  :host { display: flex; gap: 15px; align-items: flex-end; padding: 29px 9px 6px; border-radius: 5px; background: var(--panel); }
  input { height: 45px; min-width: 0; padding: 0 14px; border: 2px solid #e9e9e9; border-radius: 3px; background: #fff; color: #4b4f58; outline: 0; }
  .n { flex: 3 1 0; } .u { flex: 4 1 0; }
  button { display: grid; place-items: center; width: 43px; height: 44px; border: 1px solid #ff4555; border-radius: 4px; color: #ff4555; }
`, `<input class="n" aria-label="نص" value="new"><input class="u" aria-label="رابط" value="http://www.ochoa.com/"><button type="button" aria-label="حذف"><qr-icon name="trash" stroke="2.400" style="width:18px;height:18px"></qr-icon></button>`);

define('day-row', `
  :host { display: flex; align-items: center; gap: 27px; height: 59px; padding: 0 9px 0 15px; border-radius: 8px; background: var(--panel); }
  label { display: flex; align-items: center; gap: 8px; flex: 1; color: #16161d; font-size: 14px; }
  input[type=checkbox] { appearance: none; width: 22px; height: 22px; border: 2px solid #747b85; border-radius: 6px; background: #fff; }
  .time { display: flex; align-items: center; direction: ltr; width: 153px; height: 41px; padding-left: 12px; border: 1px solid #b4b6ba; border-radius: 4px; background: #f6f6f6; }
  .time qr-icon { width: 16px; height: 16px; color: #c6c8cb; }
  .time i { width: 1px; height: 18px; margin: 0 18px 0 8px; background: #bfc1c4; }
  .time input { width: 60px; padding: 0; border: 0; background: none; color: #111; outline: 0; font-size: 14px; }
  button { display: grid; place-items: center; width: 45px; height: 41px; border: 1px solid #8b8e96; border-radius: 4px; background: #f6f6f6; color: #8b8e96; }
  button qr-icon { width: 16px; height: 16px; }
`, e => {
  const t = n => `<span class="time"><qr-icon name="clock"></qr-icon><i></i><input aria-label="${n}" value="--:-- --" readonly></span>`;
  return `<label><input type="checkbox">${e.textContent}</label>${t('من')}${t('إلى')}<button type="button" aria-label="إضافة"><qr-icon name="plus" stroke="2.200"></qr-icon></button>`;
});

define('address-search', `
  :host { padding: 6px 11px 26px; border-radius: 10px; background: var(--panel); }
  label { display: block; margin-bottom: 5px; color: #7a7d84; font-size: 14px; }
  .r { display: flex; gap: 11px; }
  .in { flex: 1; display: flex; align-items: center; height: 41px; padding: 0 10px; border: 1px solid #b4b6ba; border-radius: 4px; background: #fff; }
  .in qr-icon { width: 20px; height: 20px; margin-left: 8px; color: #d5d7da; }
  input { flex: 1; min-width: 0; padding: 0; border: 0; outline: 0; background: none; font-size: 14px; }
  input::placeholder { color: #a9a9ae; opacity: 1; }
  button { width: 105px; height: 41px; border: 1px solid var(--green); border-radius: 4px; color: var(--green); font-size: 15px; }
`, `<label for="i">عنوان البحث</label><div class="r"><div class="in"><qr-icon name="search" stroke="1.500"></qr-icon><input id="i" placeholder="ابحث هنا"></div><button type="button">الإدخال اليدوي</button></div>`);

define('add-row', `
  :host { display: flex; align-items: center; justify-content: space-between; height: 56px; padding: 0 21px 0 16px; border: 1px solid var(--line); border-radius: 4px; background: var(--panel); font-size: 16px; }
  button { display: grid; place-items: center; width: 33px; height: 33px; border-radius: 4px; background: var(--green); color: #fff; }
  qr-icon { width: 18px; height: 18px; }
`, `<slot></slot><button type="button" aria-label="إضافة"><qr-icon name="plus" stroke="2"></qr-icon></button>`);

define('amenity-tile', `
  :host { display: flex; }
  button { flex: 1; display: flex; flex-direction: column; align-items: center; justify-content: center; gap: 6px; min-height: 96px; padding: 18px 12px 16px; border-radius: 4px; background: #fff; color: #26262e; font-size: 11px; line-height: 11px; font-weight: 500; text-align: center; }
  span { display: grid; place-items: center; width: 45px; height: 45px; border-radius: 50%; background: #ebebeb; color: var(--steel); }
  qr-icon { width: 22px; height: 22px; }
`, e => `<button type="button"><span><qr-icon name="${e.a('icon')}" stroke="1.500"></qr-icon></span><div><slot></slot></div></button>`);

define('bottom-bar', `
  :host { position: absolute; top: 1031px; left: 0; right: 0; z-index: 3; background: #fff; box-shadow: 0 -2px 8px rgba(20,30,40,.06); }
  .in { display: flex; justify-content: space-between; align-items: center; max-width: 1062px; height: 69px; margin: 0 auto; }
  button { display: flex; align-items: center; justify-content: center; gap: 9px; width: 138px; height: 47px; border: 1px solid var(--green); border-radius: 4px; font-size: 16px; font-weight: 700; }
  .back { color: var(--green); } .next { background: var(--green); color: #fff; }
  qr-icon { width: 18px; height: 18px; }
`, `<div class="in"><button class="back" type="button"><qr-icon name="right" stroke="1.800"></qr-icon>رجوع</button><button class="next" type="button">التالي<qr-icon name="back" stroke="2.200"></qr-icon></button></div>`);

/* ---------- page ---------- */
const social = ['Website','Dribbble','Facebook','Flickr','GitHub','GitLab','Google','Line','LinkedIn','Pinterest','Reddit','Skype',
  'Snapchat','Tripadvisor','Tumblr','X','Vimeo','VK','Xing','YouTube','Instagram','TikTok','WhatsApp','Telegram',
  'Messenger','Yelp','Uber Eats','Postmates','OpenTable','Spotify','SoundCloud','Apple Music','OnlyFans','DoorDash','Trustpilot','Signal','WeChat'];
const amenities = [['wifi','الواي فاي'],['chair','الجلوس'],['access','متاح الوصول'],['wc','المرحاض'],['stroller','مناسبة للأطفال'],
  ['paw','مناسب للحيوانات الاليفة'],['parking','موقف السيارات'],['bus','النقل العام'],['taxi','سيارة الأجرة'],['bed','إقامة'],
  ['cup','القهوة'],['cocktail','الشريط'],['cutlery','المطعم'],['gym','قاعة الرياضة'],['terrace','تراس خارجي']];
const days = ['الاثنين','الثلاثاء','الأربعاء','الخميس','الجمعة','السبت','الأحد'];
const palette = [['#527AC9','#7EC09F','selected'],['#EBEBEF','#232321'],['#D9E9F5','#527AC9'],['#B79DDE','#232321'],['#7EC09F','#232321'],['#ECC371','#232321']];

define('qr-page', `
  :host { position: relative; padding-bottom: 76px; background: #f4f8fb; }
  .strip { height: 65px; background: #fff; }
  .title { max-width: 1062px; margin: 0 auto; padding: 19px 16px 7px; }
  h1 { margin: 0; font-size: 22px; line-height: 30px; font-weight: 500; color: #171c2c; }
  main { display: flex; max-width: 1062px; margin: -52px auto 0; }
  .cards { flex: 1; min-width: 0; display: grid; gap: 15px; padding-right: 13px; }
  aside { flex: 0 0 370px; display: flex; justify-content: flex-end; padding-top: 70px; }
  .col { display: flex; flex-direction: column; }
  h3 { margin: 0; font-size: 14px; line-height: 20px; font-weight: 400; }
  .colors { margin-top: 5px; padding: 11px 4px 23px; border-radius: 5px; background: #f4f8fb; }
  .swatches { display: grid; grid-template-columns: repeat(5, 102px); justify-content: space-between; }
  .picks { display: flex; justify-content: space-between; align-items: flex-end; margin-top: 26px; padding: 0 17px; }
  .swap { display: grid; place-items: center; width: 50px; height: 50px; padding: 0; border: 1px solid var(--green); border-radius: 50%; background: #fff; color: var(--green); }
  .photo { display: flex; align-items: center; gap: 6px; font-size: 17px; line-height: 24px; font-weight: 700; }
  .upload { display: grid; place-items: center; width: 96px; height: 98px; margin: 13px 0 22px; padding: 3px; border: 1px dashed var(--green); border-radius: 6px; background: #f6f6f6 content-box; color: var(--green); }
  .social { display: flex; flex-wrap: wrap; gap: 5px 8px; padding: 13px 9px 14px 12px; border-radius: 5px; background: #f6f6f6; }
  .amen { display: grid; grid-template-columns: repeat(5, 1fr); gap: 14px 15px; padding: 21px 14px 22px 12px; border-radius: 5px; background: #f6f6f6; }
  .about { padding: 15px 9px 5px; border-radius: 5px; background: var(--panel); }
  textarea { display: block; width: 100%; height: 109px; padding: 10px 14px 10px 36px; border: 2px solid #e9e9e9; border-radius: 3px; background: #fff; outline: 0; font-size: 13px; line-height: 18px; }
  textarea::placeholder { color: #a9a9ae; opacity: 1; }
`, `
<div class="strip"></div>
<div class="title"><h1>2. أضف محتوى إلى رمز الاستجابة السريعة الخاص بك</h1></div>
<top-header></top-header>
<main>
  <div class="cards">
    <form-card icon="grid" heading="" sub="اختر لمسة اللون لصفحتك."><div class="col" style="padding:11px 0 23px">
      <h3>لوحة الألوان</h3>
      <div class="colors"><div class="swatches">${palette.map(p => `<color-swatch a="${p[0]}" b="${p[1]}" ${p[2] || ''}></color-swatch>`).join('')}</div>
      <div class="picks"><color-field label="اللون الأصلي" value="#527AC9" ink="#fff"></color-field><button class="swap" type="button" aria-label="تبديل"><qr-icon name="swap" stroke="1.800" style="width:20px;height:20px"></qr-icon></button><color-field label="اللون الثانوي" value="#7EC09F" ink="#1d1d1d"></color-field></div></div>
    </div></form-card>

    <form-card icon="info" heading="معلومات العمل" sub="أضف عملك أو مؤسستك." required><div class="col" style="padding:5px 0 45px">
      <div class="photo">الصورة<help-dot></help-dot></div>
      <button class="upload" type="button" aria-label="رفع صورة"><qr-icon name="image" stroke="1.800" style="width:40px;height:40px"></qr-icon></button>
      <div class="col" style="gap:22px"><text-field label="الشركة" value="Ellis-Robinson" required></text-field><text-field label="العنوان" value="Off very involve me."></text-field><text-field label="السطرجة" value="Nearly pretty yes." active></text-field><link-row></link-row></div>
    </div></form-card>

    <form-card icon="clock" heading="ساعات العمل" sub="مواعيد العمل لكل يوم من أيام الأسبوع."><div class="col" style="gap:20px;padding:20px 18px 14px">${days.map(d => `<day-row>${d}</day-row>`).join('')}</div></form-card>

    <form-card icon="pin" heading="الموقع" sub="أضف عنوانك ومعلومات الموقع."><div style="padding:10px 10px 24px"><address-search></address-search></div></form-card>

    <form-card icon="info" heading="معلومات الاتصال" sub="توفير معلومات الاتصال."><div class="col" style="gap:15px;padding:9px 0 37px">
      <text-field dark icon="user" label="اسم جهة الاتصال" placeholder="على سبيل المثال: روبرت جونيور" style="margin-bottom:6px"></text-field>
      <add-row>إضافة الهاتف</add-row><add-row>إضافة البريد الإلكتروني</add-row><add-row>أضف الموقع الإلكتروني</add-row></div></form-card>

    <form-card icon="globe" heading="الشبكات الاجتماعية" sub="أضف روابط وسائل التواصل الاجتماعي إلى صفحتك."><div style="padding:10px 0 23px"><div class="social">${social.map(s => `<social-tile brand="${s}"></social-tile>`).join('')}</div></div></form-card>

    <form-card icon="image" heading="حول الشركة" sub="أضف المزيد من المعلومات حول عملك."><div style="padding:9px 0 23px"><div class="about"><textarea aria-label="حول الشركة" placeholder="على سبيل المثال: متجر لبيع الملابس يقع مقره في لوس أنجلوس ويبيع تصميمات مبتكرة منذ أكثر من 15 عامًا"></textarea></div></div></form-card>

    <form-card icon="grid" heading="المرافق" sub="اختر وسائل الراحة المتاحة في مكانك."><div style="padding:10px 0 23px"><div class="amen">${amenities.map(a => `<amenity-tile icon="${a[0]}">${a[1]}</amenity-tile>`).join('')}</div></div></form-card>

    <form-card collapsed icon="type" heading="الخطوط" sub="اجعل صفحتك فريدة من نوعها باستخدام الخطوط الأصلية."></form-card>
    <form-card collapsed icon="smile" heading="شاشة الترحيب" sub="عرض صورة أثناء تحميل صفحتك."></form-card>
    <form-card collapsed icon="scan" heading="اسم رمز الاستجابة السريعة" sub="أعط اسمًا لرمز الاستجابة السريعة الخاص بك."></form-card>
    <form-card collapsed icon="lock" heading="كلمة المرور" help></form-card>
    <form-card collapsed icon="folder" heading="مجلد" sub="قم بربط رمز QR هذا بمجلد موجود أو مجلد جديد."></form-card>
  </div>
  <aside><phone-preview></phone-preview></aside>
</main>
<bottom-bar></bottom-bar>`);
</script>
</body>
</html>
